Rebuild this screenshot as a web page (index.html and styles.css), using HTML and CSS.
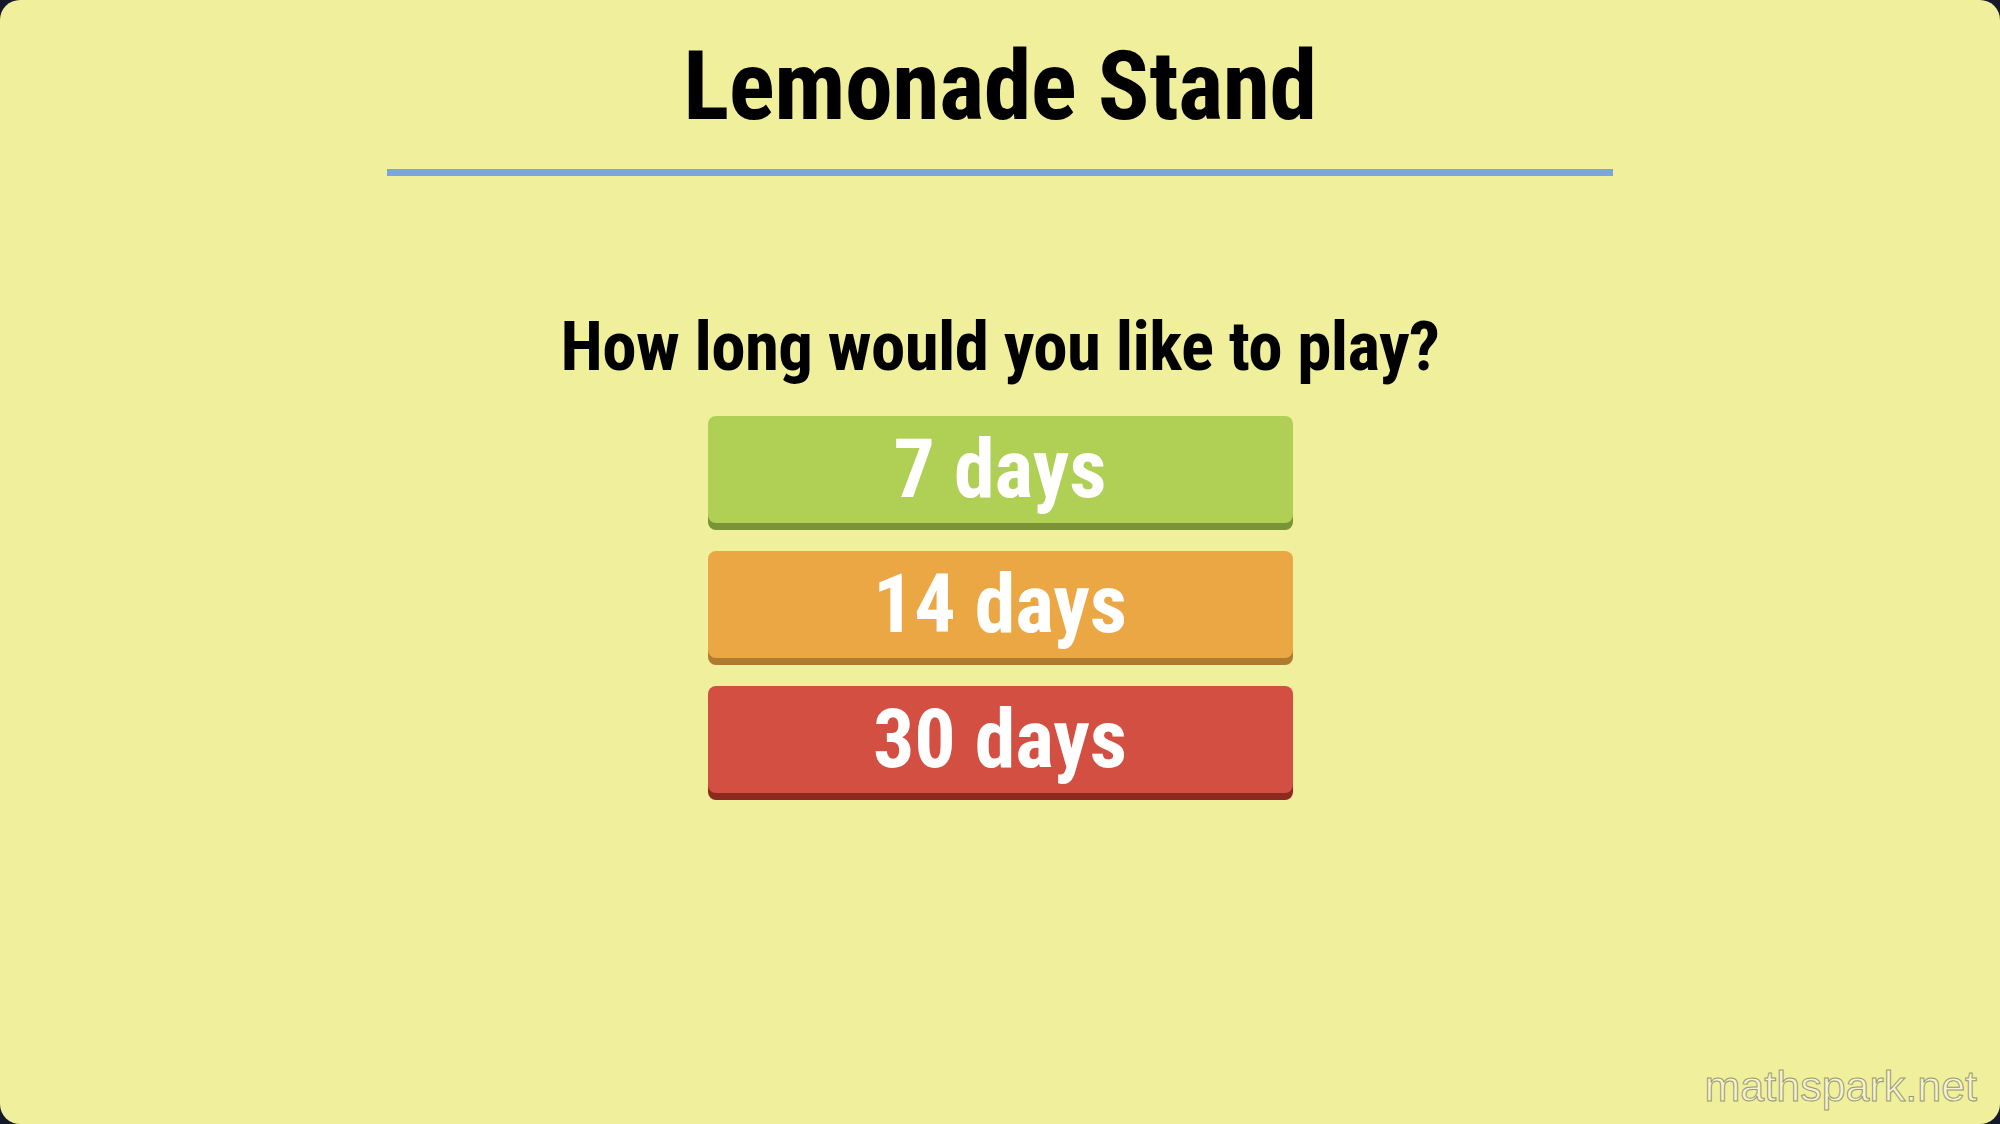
FILE: index.html
```html
<!DOCTYPE html>
<html>
<head>
<meta charset="UTF-8">
<title>Lemonade Stand</title>
<link rel="stylesheet" href="styles.css">
</head>
<body>
    <div class="screen">
        <h1 class="title">Lemonade Stand</h1>
        <hr class="title-rule">
        <h2 class="question">How long would you like to play?</h2>
        <div class="choices">
            <button class="choice green" onclick="startGame(7)">7 days</button>
            <button class="choice orange" onclick="startGame(14)">14 days</button>
            <button class="choice red" onclick="startGame(30)">30 days</button>
        </div>
        <div class="watermark">mathspark.net</div>
    </div>

<script>
function startGame(days) {
    window.gameDays = days;
}
</script>
</body>
</html>
```

FILE: styles.css
```css
body {
    margin: 0;
    padding: 0;
    background: #141a2a;
    font-family: Roboto, "Liberation Sans", sans-serif;
}
.screen {
    position: relative;
    height: 100vh;
    box-sizing: border-box;
    background: #f0ef9b;
    border-radius: 20px;
    display: flex;
    flex-direction: column;
    align-items: center;
    padding-top: 38px;
}
.title, .question, .choice {
    font-weight: 700;
    font-stretch: 75%;
}
.title {
    margin: 0;
    font-size: 96px;
    line-height: 96px;
    letter-spacing: -0.5px;
    color: #000;
}
.title-rule {
    width: 1226px;
    height: 7px;
    margin: 35px 0 0 0;
    border: none;
    background: #7aa6d3;
}
.question {
    margin: 137px 0 0 0;
    font-size: 69px;
    line-height: 68px;
    letter-spacing: -0.6px;
    color: #000;
}
.choices {
    margin-top: 35px;
    display: flex;
    flex-direction: column;
    gap: 28px;
}
.choice {
    width: 585px;
    height: 107px;
    border: none;
    border-radius: 8px;
    padding: 0;
    font-family: Roboto, "Liberation Sans", sans-serif;
    font-size: 82px;
    line-height: 107px;
    color: #fff;
    cursor: pointer;
}
.green {
    background: #afcf55;
    box-shadow: 0 7px 0 #7b9337;
}
.orange {
    background: #eba744;
    box-shadow: 0 7px 0 #b07a30;
}
.red {
    background: #d34f42;
    box-shadow: 0 7px 0 #8c2a20;
}
.watermark {
    position: absolute;
    right: 23px;
    bottom: 16px;
    font-family: "Liberation Sans", Arial, sans-serif;
    font-size: 43px;
    line-height: 43px;
    color: #f6f3d2;
    -webkit-text-stroke: 1px #9a996f;
}
```
